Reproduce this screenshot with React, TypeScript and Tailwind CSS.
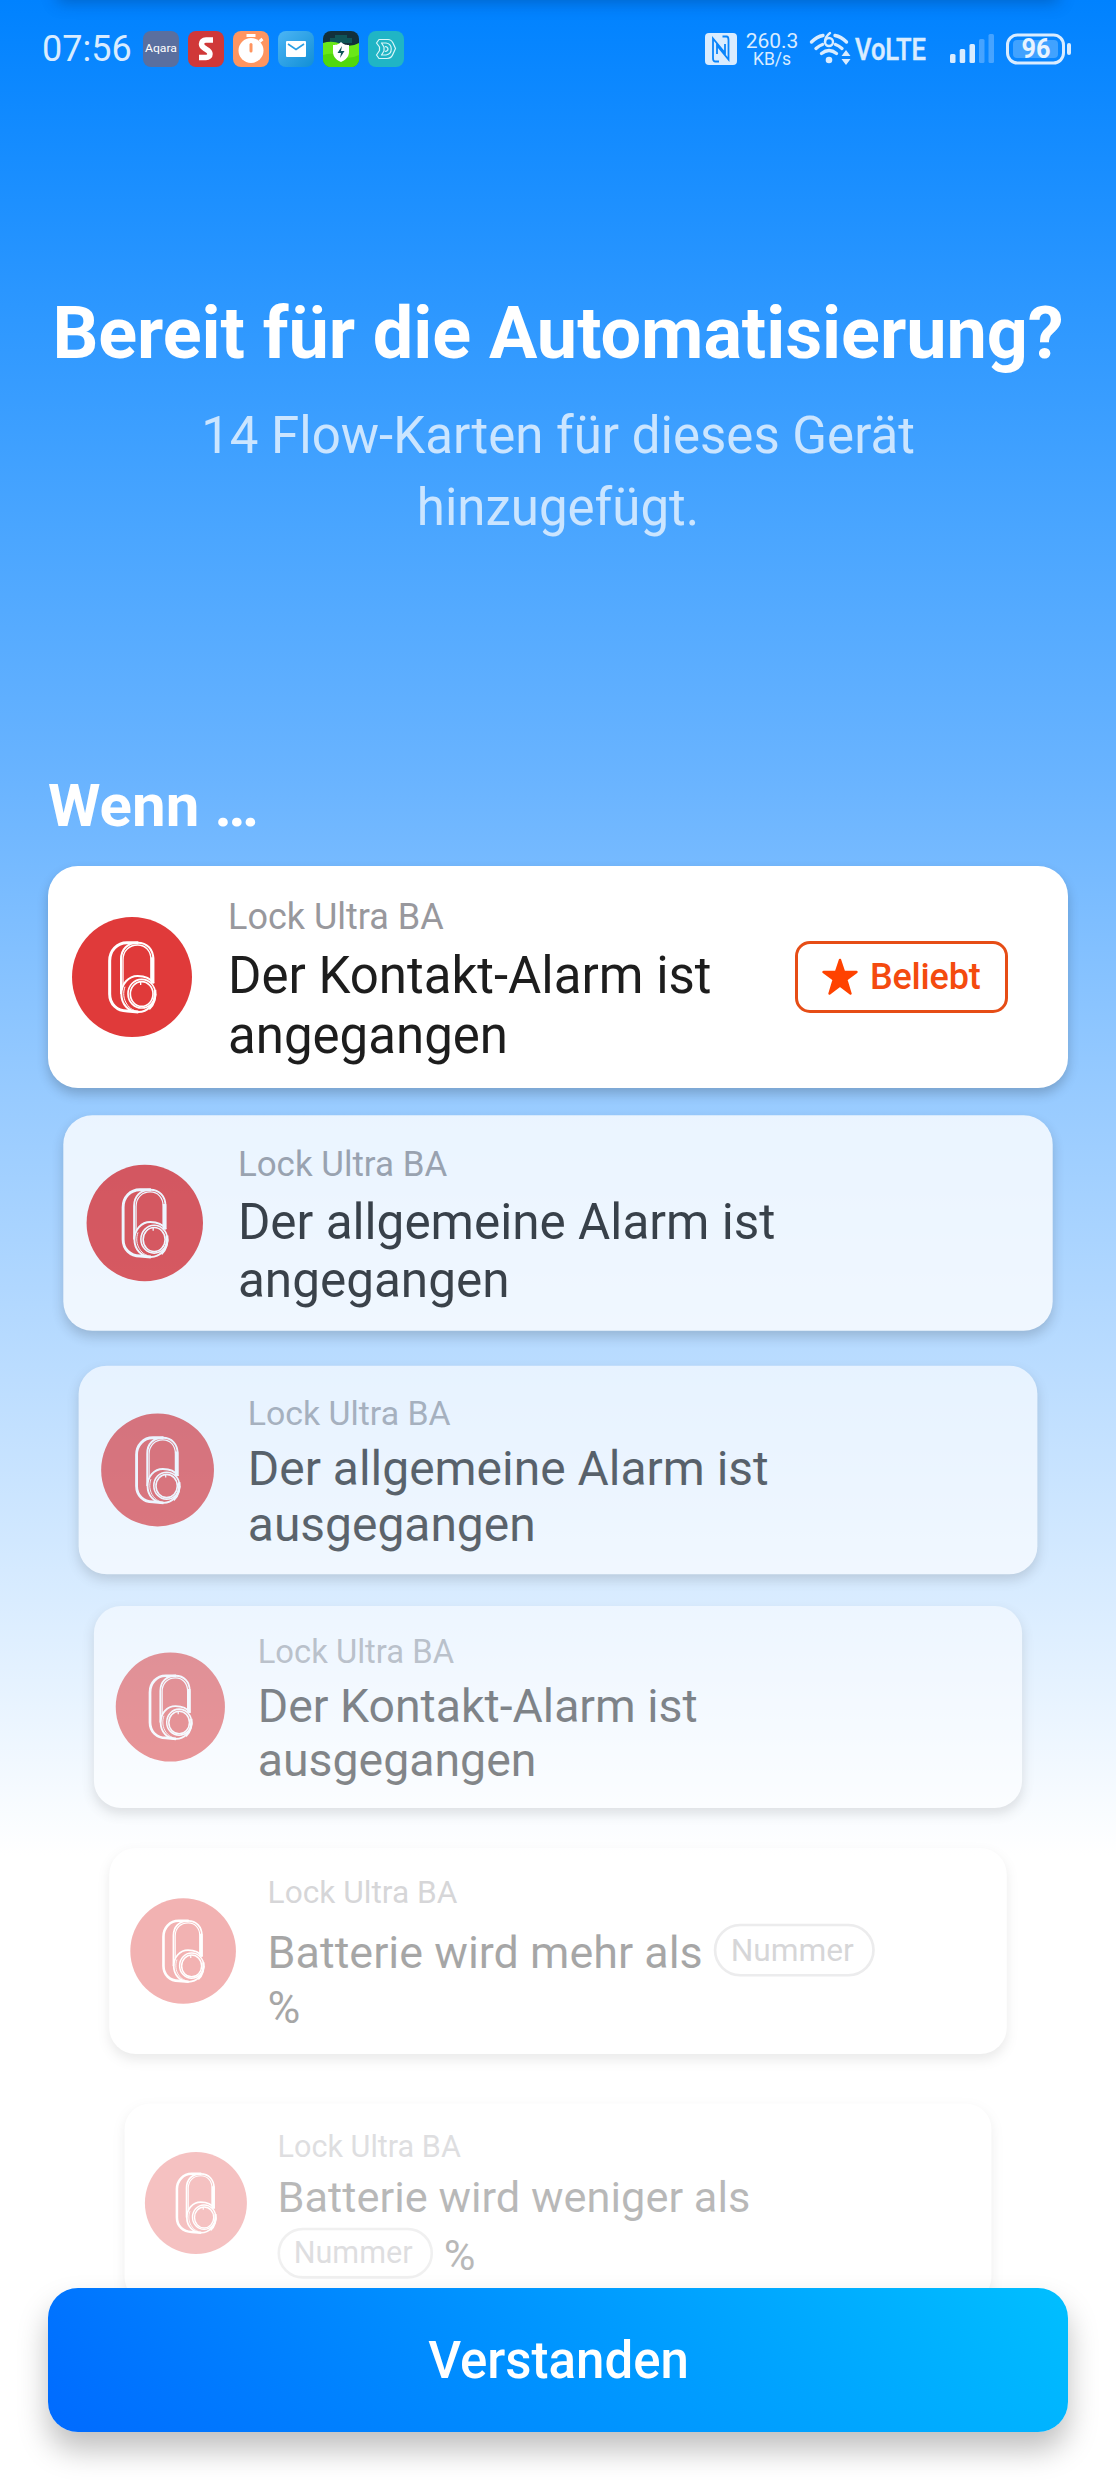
import React from "react";

interface FlowCard {
  title: React.ReactNode;
  className: string;
  popular?: boolean;
}

const ArgumentPill: React.FC = () => (
  <span className="inline-flex h-[60px] w-[183px] my-[6px] align-[8px] items-center justify-center rounded-full border-[3px] border-[#cfcfd1] pr-[5px] text-[36px] leading-[54px] text-[#98989d]">
    Nummer
  </span>
);

const cards: FlowCard[] = [
  {
    title: <>Der Kontakt-Alarm ist<br />angegangen</>,
    className: "h-[222px]",
    popular: true,
  },
  {
    title: <>Der allgemeine Alarm ist<br />angegangen</>,
    className: "h-[222px] mt-[24px] scale-[0.97] opacity-80",
  },
  {
    title: <>Der allgemeine Alarm ist<br />ausgegangen</>,
    className: "h-[222px] mt-[25px] scale-[0.94] opacity-[0.65]",
  },
  {
    title: <>Der Kontakt-Alarm ist<br />ausgegangen</>,
    className: "h-[222px] mt-[15px] scale-[0.91] opacity-[0.52]",
  },
  {
    title: <>Batterie wird mehr als <ArgumentPill /><br />%</>,
    className: "h-[234px] mt-[16px] scale-[0.88] opacity-[0.39]",
  },
  {
    title: <>Batterie wird weniger als<br /><ArgumentPill /> %</>,
    className: "h-[234px] mt-[18px] scale-[0.85] opacity-[0.31]",
  },
];

const LockIcon: React.FC = () => (
  <div className="w-[120px] h-[120px] shrink-0 rounded-full bg-[#e03a3a]">
    <svg
      width="120"
      height="120"
      viewBox="0 0 360 360"
      fill="none"
      stroke="#fff"
    >
      <g transform="translate(75 39)">
        <path
          d="M124 38H90C60 38 38 62 38 92V192C38 222 60 243 90 243L124 246"
          strokeWidth="9"
        />
        <path d="M72 192V88C72 58 92 38 122 38C150 38 169 58 169 88V160" strokeWidth="6" />
        <path d="M78 166V90C78 62 97 45 122 45C145 45 162 62 162 90V155" strokeWidth="4" />
        <path d="M166 82V160" strokeWidth="11" />
        <path
          d="M170 160C160 144 142 138 122 138C94 138 73 162 73 192C73 222 94 246 124 246C152 246 174 222 175 192"
          strokeWidth="6"
        />
        <path d="M84 170C78 186 78 208 92 226C98 234 104 238 112 241" strokeWidth="3" />
        <ellipse cx="134" cy="191" rx="41" ry="43" strokeWidth="5" />
        <ellipse cx="134" cy="192" rx="34" ry="37" strokeWidth="5" />
        <path d="M174 180C177 200 171 224 156 237" strokeWidth="8" />
        <path d="M131 156V165" strokeWidth="4" />
      </g>
    </svg>
  </div>
);

const PopularBadge: React.FC = () => (
  <div className="w-[213px] h-[72px] shrink-0 flex items-center gap-[12px] pl-[24px] rounded-[15px] border-[3px] border-[#e64d16] text-[#f44a0e]">
    <svg width="36" height="38" viewBox="0 0 36 38">
      <path
        d="M18 2L22 14H34.5L24.3 21.5L28.5 35.5L18 27.5L7.500 35.500L11.700 21.500L1.500 14H14Z"
        fill="#ff4200"
        stroke="#ff4200"
        strokeWidth="2.400"
        strokeLinejoin="round"
      />
    </svg>
    <span className="text-[36px] leading-[42px] font-medium tracking-[-0.2px]">Beliebt</span>
  </div>
);

const AppIcons: React.FC = () => (
  <div className="flex gap-[9px] ml-[10px]">
    <svg width="36" height="36" viewBox="0 0 36 36">
      <rect width="36" height="36" rx="8" fill="#5a6f9f" />
      <text x="2" y="21" fontSize="11" fill="#fff" textLength="32" lengthAdjust="spacingAndGlyphs">
        Aqara
      </text>
    </svg>
    <svg width="36" height="36" viewBox="0 0 36 36">
      <rect width="36" height="36" rx="8" fill="#d03838" />
      <path
        d="M25 9H18C15 9 13.500 11 13.500 13C13.500 16 16 17 18 18.200C20.500 19.500 22 21 22 23C22 25 20.500 26.500 18 26.500H11"
        fill="none"
        stroke="#fff"
        strokeWidth="5.500"
      />
    </svg>
    <svg width="36" height="36" viewBox="0 0 36 36">
      <rect width="36" height="36" rx="8" fill="#ff9560" />
      <circle cx="18" cy="19.500" r="12.500" fill="#fff" />
      <path d="M13.500 4.500H22.500M26.500 10.500L29.500 8" stroke="#fff" strokeWidth="3" />
      <path d="M18 13.500V20" stroke="#ff9560" strokeWidth="3" strokeLinecap="round" />
    </svg>
    <svg width="36" height="36" viewBox="0 0 36 36">
      <defs>
        <linearGradient id="mail" x1="0" y1="0" x2="1" y2="1">
          <stop offset="0" stopColor="#4cb5f5" />
          <stop offset="1" stopColor="#118fd6" />
        </linearGradient>
      </defs>
      <rect width="36" height="36" rx="8" fill="url(#mail)" />
      <rect x="8" y="10" width="20" height="16" rx="1" fill="#fff" />
      <path d="M10 13L18 18.500L26 13" fill="none" stroke="#2a9fe4" strokeWidth="1.600" />
    </svg>
    <svg width="36" height="36" viewBox="0 0 36 36">
      <defs>
        <clipPath id="battery-clip">
          <rect width="36" height="36" rx="8" />
        </clipPath>
      </defs>
      <g clipPath="url(#battery-clip)">
        <rect width="36" height="36" fill="#12303c" />
        <path d="M7 7H12V4H24V7H29V12H7Z" fill="#0f5558" />
        <path d="M0 12Q9 9 18 13T36 12V36H0Z" fill="#69e818" />
        <path d="M0 24Q10 21 18 25T36 24V36H0Z" fill="#50d80c" />
        <path d="M18 11C21 14 24 14 26 14V21C26 26 22 29.500 18 31C14 29.500 10 26 10 21V14C12 14 15 14 18 11Z" fill="#fff" />
        <path d="M19 15L14.500 22H18L17 27L21.500 20H18Z" fill="#0f5558" />
      </g>
    </svg>
    <svg width="36" height="36" viewBox="0 0 36 36">
      <rect width="36" height="36" rx="8" fill="#20b5c5" />
      <g fill="none" stroke="#d8f6f8" strokeWidth="1.200" strokeLinejoin="round">
        <path d="M11 8.500H20C23 8.500 24 10 25 12L27.500 17.500L25 23C24 26 22 27.500 19 27.500H11L8.500 24L11.500 19.500V16L8.500 12Z" />
        <path d="M13.500 12H18C25 13 25 23 18 24H13.500L16 20V16Z" />
        <path d="M17 15.500C21 16 21 20 17 20.500" />
      </g>
    </svg>
  </div>
);

const StatusBar: React.FC = () => (
  <div className="h-[98px] pl-[42px] pr-[44px] flex items-center justify-between text-[#d9ecff]">
    <div className="flex items-center">
      <span className="w-[91px] text-[36px] leading-[42px]">07:56</span>
      <AppIcons />
    </div>

    <div className="flex items-center">
      {/* NFC */}
      <svg width="32" height="32" viewBox="0 0 32 32">
        <rect width="32" height="32" rx="4" fill="#d9ecff" />
        <path
          d="M14 28.500H10Q8 28.500 8 25V5.500L20 20V11M17.500 3.500H21.500Q23.500 3.500 23.500 7V26.500L12 12.500V21"
          fill="none"
          stroke="#0a85fb"
          strokeWidth="1.800"
        />
      </svg>

      {/* Network speed */}
      <div className="w-[54px] ml-[8px] mr-px pt-[1px] flex flex-col items-center">
        <span className="text-[21px] leading-[19px]">260.3</span>
        <span className="text-[17.5px] leading-[16px]">KB/s</span>
      </div>

      {/* Wi-Fi 6 */}
      <svg className="ml-[9px]" width="42" height="36" viewBox="0 0 42 36">
        <g fill="none" stroke="#d9ecff" strokeWidth="3.400" strokeLinecap="round">
          <path d="M2.500 11Q8 5.500 14 4.500M26 4.500Q32 5.500 37.500 11" />
          <path d="M7 17.500Q10.500 14.500 13.500 13.500M26.500 13.500Q29.500 14.500 33 17.500" />
          <path d="M12.500 22.500Q20 16.500 27.500 22.500" />
        </g>
        <circle cx="20" cy="29" r="3.300" fill="#d9ecff" />
        <path d="M21 2Q16 6 16 11" fill="none" stroke="#d9ecff" strokeWidth="2.400" strokeLinecap="round" />
        <circle cx="20" cy="11" r="4" fill="none" stroke="#d9ecff" strokeWidth="2.400" />
        <path d="M37 19L41.500 25H32.500ZM37 34L41.500 28H32.500Z" fill="#d9ecff" />
      </svg>

      <svg className="ml-[4px] overflow-visible" width="74" height="40" viewBox="0 0 74 40">
        <text x="0" y="31" fontSize="31" fontWeight="500" fill="#d9ecff" stroke="#d9ecff" strokeWidth="0.500" textLength="71" lengthAdjust="spacingAndGlyphs">
          VoLTE
        </text>
      </svg>

      {/* Signal */}
      <svg className="ml-[21px]" width="45" height="30" viewBox="0 0 45 30" fill="#d9ecff">
        <rect x="0" y="20" width="5.500" height="9" rx="1.500" />
        <rect x="9.700" y="15" width="5.500" height="14" rx="1.500" />
        <rect x="19.500" y="10" width="5.500" height="19" rx="1.500" />
        <rect x="29" y="5" width="5.500" height="24" rx="1.500" opacity="0.3" />
        <rect x="38.500" y="0" width="5.500" height="29" rx="1.500" opacity="0.3" />
      </svg>

      {/* Battery */}
      <svg className="ml-[11px]" width="66" height="32" viewBox="0 0 66 32">
        <rect x="1.500" y="2" width="56" height="28" rx="10" fill="none" stroke="#d9ecff" strokeWidth="3" />
        <rect x="7" y="7" width="45" height="18" rx="4" fill="#d9ecff" opacity="0.28" />
        <rect x="61" y="10" width="4" height="12" rx="2" fill="#d9ecff" />
        <text x="30" y="25" fontSize="27" fontWeight="700" fill="#e9f4ff" textAnchor="middle" textLength="29" lengthAdjust="spacingAndGlyphs">
          96
        </text>
      </svg>
    </div>
  </div>
);

const App: React.FC = () => {
  return (
    <div
      className="relative w-[1116px] h-[2480px] overflow-hidden bg-white bg-[linear-gradient(to_bottom,#0082ff_0px,#2a96ff_290px,#4ba6ff_540px,#68b3ff_770px,#98cbff_1100px,#b8dbff_1350px,#d9ecff_1600px,#ffffff_1855px)] font-['Roboto',sans-serif]"
    >
      {/* Edge of the sheet above */}
      <div className="absolute -top-[40px] left-[60px] right-[60px] h-[40px] shadow-[0_0_16px_2px_rgba(0,40,90,0.35)]" />

      <StatusBar />

      <header className="pt-[194px] text-center">
        <h1 className="text-[72px] leading-[84px] font-bold tracking-[-0.06px] text-white whitespace-nowrap">
          Bereit für die Automatisierung?
        </h1>
        <p className="mt-[24px] text-[51px] leading-[72px] text-[#cbe5ff]">
          14 Flow-Karten für dieses Gerät
          <br />
          hinzugefügt.
        </p>
      </header>

      <main className="px-[48px] pt-[227px]">
        <h2 className="text-[60px] leading-[70px] font-bold text-white">Wenn …</h2>

        <div className="pt-[25px]">
          {cards.map((card, index) => (
            <div
              key={index}
              className={`${card.className} flex items-center pl-[24px] pr-[60px] rounded-[30px] bg-white shadow-[0_6px_12px_rgba(0,0,0,0.2)]`}
            >
              <LockIcon />
              <div className="flex-1 self-start ml-[36px] pt-[30px] whitespace-nowrap">
                <p className="text-[36px] leading-[42px] text-[#98989d]">Lock Ultra BA</p>
                <p className="mt-[8px] text-[51px] leading-[60px] text-[#1d1d1d]">{card.title}</p>
              </div>
              {card.popular && <PopularBadge />}
            </div>
          ))}
        </div>
      </main>

      {/* Pinned confirm button */}
      <button className="absolute left-[48px] right-[48px] bottom-[48px] h-[144px] pt-[2px] pl-[1px] rounded-[30px] bg-[linear-gradient(45deg,#006aff,#00bfff)] text-white text-[51px] font-medium shadow-[0_18px_30px_rgba(0,0,0,0.25)]">
        Verstanden
      </button>
    </div>
  );
};

export default App;
